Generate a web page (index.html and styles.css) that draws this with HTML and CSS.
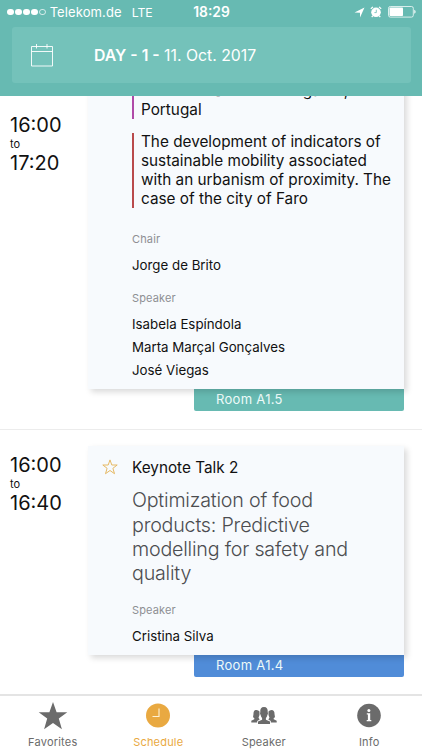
FILE: index.html
```html
<!DOCTYPE html>
<html lang="en">
<head>
  <meta charset="UTF-8"/>
  <meta name="viewport" content="width=device-width, initial-scale=1.0"/>
  <title>Schedule</title>
  <link rel="stylesheet" href="styles.css">
</head>
<body>

  <!-- Header -->
  <header class="header">
    <div class="status-bar">
      <div class="status-left">
        <span class="signal"><i></i><i></i><i></i><i></i><i class="empty"></i></span>
        <span class="carrier">Telekom.de</span>
        <span class="network">LTE</span>
      </div>
      <span class="clock">18:29</span>
      <div class="status-right">
        <svg width="11" height="11" viewBox="0 0 11 11"><path d="M10.5 .5 6 10.5V5.8L.5 5.5z" fill="#fff"/></svg>
        <svg class="alarm" width="12" height="12" viewBox="0 0 12 12">
          <circle cx="6" cy="6.3" r="4.8" fill="#fff"/>
          <path d="M.8 2.8 3 .9M9 .9l2.2 1.9M2.8 9.8 1.7 11M9.2 9.8l1.1 1.2" stroke="#fff" stroke-width="1.2"/>
          <path d="M6.3 3.7v2.9H4.4" fill="none" stroke="#67bab2" stroke-width=".8"/>
        </svg>
        <svg width="28" height="12" viewBox="0 0 28 12">
          <rect x=".5" y=".5" width="24.8" height="10.6" rx="1.8" fill="none" stroke="#fff" stroke-opacity=".75"/>
          <rect x="1.5" y="1.5" width="13.5" height="8.6" rx=".8" fill="#fff"/>
          <path d="M26.3 3.8q1.3.5 1.3 2t-1.3 2z" fill="#fff"/>
        </svg>
      </div>
    </div>
    <div class="day-picker">
      <svg width="22" height="23" viewBox="0 0 22 23" fill="none" stroke="#fff" stroke-opacity=".9">
        <path d="M.5 2.5h21v19.5H.5zM.5 7.5h21M5.5 0v4.5M16 0v4.5"/>
      </svg>
      <span class="day-label"><b>DAY - 1 -</b> 11. Oct. 2017</span>
    </div>
  </header>

  <!-- Schedule -->
  <main class="content">
    <section class="slot slot-scrolled">
      <div class="time">16:00<small>to</small>17:20</div>
      <div class="talk">
        <div class="card">
          <p class="paper purple">Center of Studies in Algarve,<br>Portugal</p>
          <p class="paper red">The development of indicators of sustainable mobility associated with an urbanism of proximity. The case of the city of Faro</p>
          <h4>Chair</h4>
          <p class="person">Jorge de Brito</p>
          <h4>Speaker</h4>
          <p class="person">Isabela Espíndola</p>
          <p class="person">Marta Marçal Gonçalves</p>
          <p class="person">José Viegas</p>
        </div>
        <div class="room teal">Room A1.5</div>
      </div>
    </section>

    <section class="slot">
      <div class="time">16:00<small>to</small>16:40</div>
      <div class="talk">
        <div class="card">
          <div class="card-title">
            <svg width="16" height="16" viewBox="0 0 16 16"><path d="M8 .9 9.8 6H15.2L10.9 9.3 12.5 14.7 8 11.5 3.5 14.7 5.1 9.3.8 6H6.200z" fill="none" stroke="#e6b964"/></svg>
            <h3>Keynote Talk 2</h3>
          </div>
          <h2>Optimization of food products: Predictive modelling for safety and quality</h2>
          <h4>Speaker</h4>
          <p class="person">Cristina Silva</p>
        </div>
        <div class="room blue">Room A1.4</div>
      </div>
    </section>
  </main>

  <!-- Bottom Navigation -->
  <nav class="bottom-nav">
    <div class="nav-item">
      <svg width="30" height="28" viewBox="0 0 30 28"><path d="M15 0 18.6 10.2H29.3L20.8 16.6 23.9 27.3 15 21 6.1 27.3 9.2 16.6.7 10.2H11.4z" fill="#6b6b6b"/></svg>
      <span>Favorites</span>
    </div>
    <div class="nav-item active">
      <svg width="24" height="28" viewBox="0 0 24 28"><circle cx="12" cy="13.5" r="12" fill="#e9a941"/><path d="M13 6.5v8H6.5" fill="none" stroke="#fff2d5" stroke-width="1.1"/></svg>
      <span>Schedule</span>
    </div>
    <div class="nav-item">
      <svg width="26" height="28" viewBox="0 0 26 28" fill="#6b6b6b">
        <path d="M5.5 8C3.300 8 2.300 9.700 2.500 12L2 15.300 3.300 16v1.200L.3 18.700V20.500H6.200V18.900L8.700 17.400 7.500 15.800 8.500 13V9.500Q7.500 8 5.500 8z"/>
        <path d="M20.500 8C22.700 8 23.700 9.700 23.500 12L24 15.300 22.700 16v1.200L25.700 18.700V20.500H19.800V18.900L17.300 17.400 18.500 15.800 17.500 13V9.500Q18.500 8 20.500 8z"/>
        <path d="M13 5C10.100 5 9 7 9.300 10.100L9 11.500 9.800 13.500Q10.100 15 11.100 16V17.700L7 19.400V22H19V19.400L14.900 17.700V16Q15.900 15 16.200 13.500L17 11.500 16.700 10.100C17 7 15.900 5 13 5z"/>
      </svg>
      <span>Speaker</span>
    </div>
    <div class="nav-item">
      <svg width="24" height="28" viewBox="0 0 24 28"><circle cx="12" cy="13.5" r="11.8" fill="#6b6b6b"/><circle cx="11.9" cy="8.5" r="1.5" fill="#fff"/><path d="M9.8 11.2H13.2V18H14.300V19.200H9.700V18H10.900V12.400H9.800z" fill="#fff"/></svg>
      <span>Info</span>
    </div>
  </nav>

</body>
</html>
```

FILE: styles.css
```css
* {
  box-sizing: border-box;
}
body {
  margin: 0;
  font-family: Inter, "Liberation Sans", sans-serif;
  display: flex;
  flex-direction: column;
  height: 100vh;
  overflow: hidden;
  background: #fff;
  color: #111;
}
h2, h3, h4, p {
  margin: 0;
  font-weight: 400;
}
svg {
  display: block;
  flex: none;
}
/* Header */
.header {
  flex: none;
  height: 96px;
  background: #67bab2;
  color: #fff;
}
.status-bar {
  display: grid;
  grid-template-columns: 1fr auto 1fr;
  align-items: center;
  height: 24px;
  padding: 0 6px 0 7px;
  font-size: 13px;
}
.status-left,
.status-right,
.signal {
  display: flex;
  align-items: center;
}
.status-right {
  justify-content: flex-end;
}
.signal {
  gap: 1.3px;
}
.signal i {
  width: 6.7px;
  height: 6.7px;
  border-radius: 50%;
  background: #fff;
}
.signal .empty {
  background: none;
  border: 1px solid rgba(255, 255, 255, .7);
}
.carrier {
  margin-left: 4px;
  letter-spacing: .1px;
}
.network {
  margin-left: 10px;
  font-size: 12.3px;
}
.clock {
  font-size: 13.8px;
  font-weight: 600;
}
.alarm {
  margin: 0 6px 0 5px;
}
.day-picker {
  display: flex;
  align-items: center;
  height: 56px;
  margin: 3px 11px 0 12px;
  padding-left: 19px;
  border-radius: 3px;
  background: #74c2ba;
}
.day-label {
  margin-left: 41px;
  font-size: 15.8px;
}
.day-label b {
  font-weight: 600;
}
/* Schedule */
.content {
  flex: 1;
  min-height: 0;
  overflow: hidden;
}
.slot {
  display: flex;
  padding: 16px 18px 18px 10px;
}
.slot-scrolled {
  padding-top: 0;
  border-bottom: 1px solid #ececec;
}
.time {
  width: 78px;
  padding-top: 8px;
  font-size: 20px;
  line-height: 23px;
}
.slot-scrolled .time {
  padding-top: 18px;
}
.time small {
  display: block;
  font-size: 11px;
  line-height: 15px;
}
.talk {
  flex: 1;
}
.card {
  position: relative;
  padding: 12px 8px 7px 44px;
  background: #f7fafd;
  box-shadow: 3px 3px 6px rgba(0, 0, 0, .15);
}
.slot-scrolled .card {
  margin-top: -26px;
}
.paper {
  padding-left: 7px;
  border-left: 2px solid;
  margin-bottom: 14px;
  font-size: 15.3px;
  line-height: 18.7px;
}
.purple {
  border-color: #b04aa8;
}
.red {
  border-color: #b94a4c;
}
.card h4 {
  margin: 14px 0 8px;
  font-size: 11px;
  line-height: 14px;
  letter-spacing: .15px;
  color: #8e8f93;
}
.card .paper + h4 {
  margin-top: 24px;
}
.card h2 + h4 {
  margin-top: 18px;
}
.person {
  font-size: 13.3px;
  line-height: 23px;
}
.card-title {
  display: flex;
  align-items: center;
  gap: 14px;
  height: 18px;
  margin-left: -30px;
}
.card h3 {
  font-size: 15.3px;
}
.card h2 {
  margin-top: 12px;
  padding-right: 16px;
  font-size: 19.7px;
  font-weight: 300;
  line-height: 24.3px;
  letter-spacing: -.22px;
  color: #4c4d50;
}
.room {
  height: 22px;
  margin-left: 106px;
  padding-left: 22px;
  border-radius: 0 0 2px 2px;
  font-size: 13px;
  line-height: 21px;
  letter-spacing: .3px;
  color: #eefaf9;
}
.teal {
  background: #67bab2;
}
.blue {
  background: #508cd8;
}
/* Bottom navigation */
.bottom-nav {
  flex: none;
  display: flex;
  height: 56px;
  border-top: 2px solid #e4e4e4;
  background: #fff;
}
.nav-item {
  flex: 1;
  display: flex;
  flex-direction: column;
  align-items: center;
  padding-top: 6px;
  font-size: 11px;
  line-height: 14px;
  letter-spacing: .2px;
  color: #6b6b6b;
}
.nav-item span {
  margin-top: 5px;
}
.nav-item.active {
  color: #e9a941;
}
```
